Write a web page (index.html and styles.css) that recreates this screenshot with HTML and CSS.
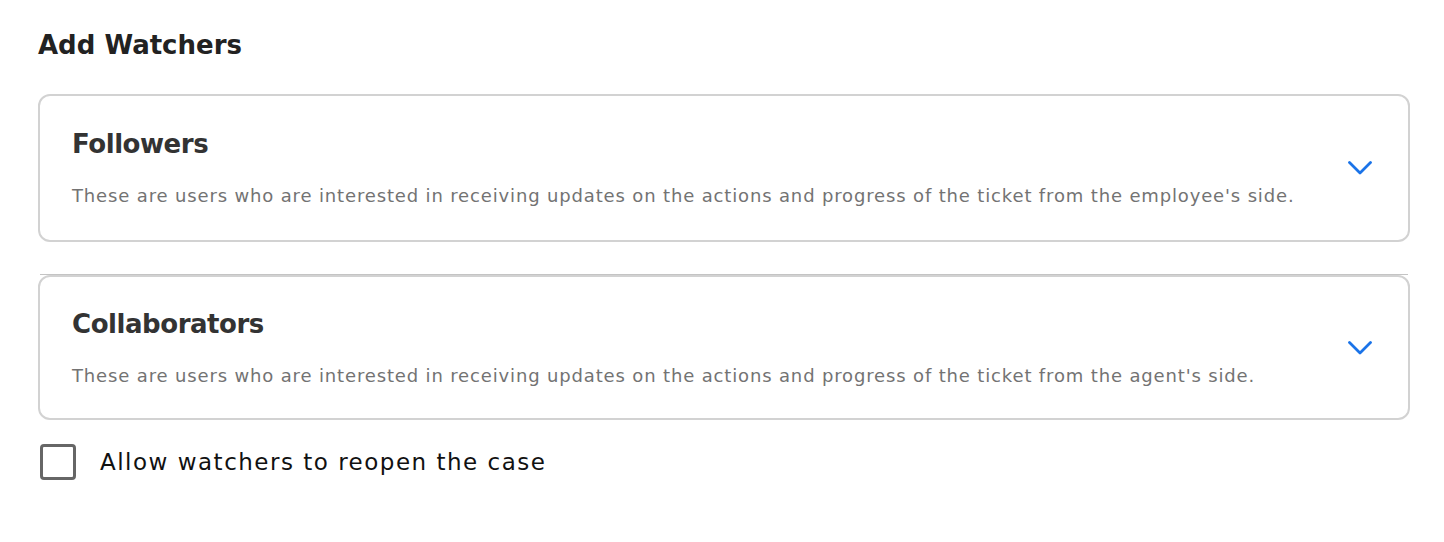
FILE: index.html
```html
<!DOCTYPE html>
<html lang="en">
<head>
<meta charset="utf-8">
<title>Add Watchers</title>
<link rel="stylesheet" href="styles.css">
</head>
<body>
<main class="page">
  <h2 class="page-title">Add Watchers</h2>
  <section class="card">
    <div class="card-text">
      <h3 class="card-title">Followers</h3>
      <p class="card-desc">These are users who are interested in receiving updates on the actions and progress of the ticket from the employee's side.</p>
    </div>
    <svg class="chevron" width="24" height="14" viewBox="0 0 24 14" aria-hidden="true"><path d="M1.5 1.5 L12 12 L22.5 1.5" fill="none" stroke="#1a73e8" stroke-width="2.8" stroke-linecap="round" stroke-linejoin="round"/></svg>
  </section>
  <div class="divider"></div>
  <section class="card card-second">
    <div class="card-text">
      <h3 class="card-title">Collaborators</h3>
      <p class="card-desc">These are users who are interested in receiving updates on the actions and progress of the ticket from the agent's side.</p>
    </div>
    <svg class="chevron" width="24" height="14" viewBox="0 0 24 14" aria-hidden="true"><path d="M1.5 1.5 L12 12 L22.5 1.5" fill="none" stroke="#1a73e8" stroke-width="2.8" stroke-linecap="round" stroke-linejoin="round"/></svg>
  </section>
  <label class="check-row">
    <span class="checkbox"></span>
    <span class="check-label">Allow watchers to reopen the case</span>
  </label>
</main>
</body>
</html>
```

FILE: styles.css
```css
* { box-sizing: border-box; }
body {
  margin: 0;
  background: #fff;
  font-family: "DejaVu Sans", "Open Sans", sans-serif;
}
.page {
  padding: 28px 34px 0 38px;
}
.page-title {
  margin: 0 0 32px;
  font-size: 26px;
  line-height: 34px;
  font-weight: 700;
  color: #222;
}
.card {
  display: flex;
  align-items: center;
  border: 2px solid #d2d2d2;
  border-radius: 12px;
  padding: 30px 36px 30px 32px;
  min-height: 148px;
}
.card-second {
  min-height: 145px;
}
.card-text {
  flex: 1;
  padding-top: 1px;
}
.card-title {
  margin: 0 0 25px;
  font-size: 26px;
  line-height: 30px;
  font-weight: 700;
  letter-spacing: -0.45px;
  color: #333;
}
.card-desc {
  margin: 0;
  font-size: 18px;
  line-height: 24px;
  letter-spacing: 0.85px;
  color: #737373;
}
.chevron {
  flex: none;
  display: block;
}
.divider {
  height: 1px;
  background: #c4c4c4;
  margin: 32px 2px 0;
}
.check-row {
  display: flex;
  align-items: center;
  gap: 24px;
  margin-top: 24px;
  padding-left: 2px;
}
.checkbox {
  width: 36px;
  height: 36px;
  border: 3px solid #666;
  border-radius: 4px;
  flex: none;
}
.check-label {
  font-size: 23px;
  letter-spacing: 1.5px;
  color: #111;
}
```
